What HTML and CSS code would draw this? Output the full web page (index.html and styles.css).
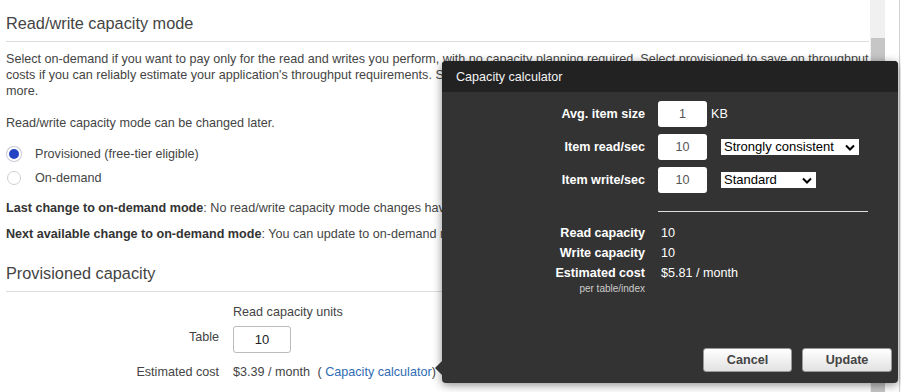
FILE: index.html
```html
<!DOCTYPE html>
<html lang="en">
<head>
    <meta charset="UTF-8">
    <title>Create table - capacity</title>
    <link rel="stylesheet" href="styles.css">
</head>
<body>

    <div class="page">
        <div class="panel">
            <div class="content">
                <h2 class="section-title first">Read/write capacity mode</h2>
                <p class="desc">Select on-demand if you want to pay only for the read and writes you perform, with no capacity planning required. Select provisioned to save on throughput costs if you can reliably estimate your application's throughput requirements. See the DynamoDB pricing page and DynamoDB Developer Guide to learn more.</p>
                <p class="later">Read/write capacity mode can be changed later.</p>

                <div class="radio-group">
                    <label class="radio-row"><span class="radio checked"></span>Provisioned (free-tier eligible)</label>
                    <label class="radio-row"><span class="radio"></span>On-demand</label>
                </div>

                <p class="note"><strong>Last change to on-demand mode</strong>: No read/write capacity mode changes have been made to this table.</p>
                <p class="note"><strong>Next available change to on-demand mode</strong>: You can update to on-demand mode at any time.</p>

                <h2 class="section-title second">Provisioned capacity</h2>
                <div class="cap-grid">
                    <span></span>
                    <span class="col-head">Read capacity units</span>
                    <span class="cap-label table-label">Table</span>
                    <span><input class="cap-input" type="text" value="10"></span>
                    <span class="cap-label cost-label">Estimated cost</span>
                    <span class="cost-value">$3.39 / month <span class="calc-link">(&nbsp;<a href="#">Capacity calculator</a>)</span></span>
                </div>
            </div>
            <div class="scrollbar"><div class="thumb"></div></div>
        </div>
        <div class="edge"></div>

        <div class="calc">
            <div class="calc-head">Capacity calculator</div>
            <div class="calc-body">
                <div class="calc-form">
                    <span class="calc-label">Avg. item size</span>
                    <input class="calc-input" type="text" value="1">
                    <span class="unit">KB</span>

                    <span class="calc-label">Item read/sec</span>
                    <input class="calc-input" type="text" value="10">
                    <span class="select-wrap wide">
                        <select class="calc-select"><option>Strongly consistent</option><option>Eventually consistent</option></select>
                        <svg class="chev" width="10" height="7" viewBox="0 0 10 7"><path d="M1 1.5 L5 5.5 L9 1.5" fill="none" stroke="#000" stroke-width="2"/></svg>
                    </span>

                    <span class="calc-label">Item write/sec</span>
                    <input class="calc-input" type="text" value="10">
                    <span class="select-wrap narrow">
                        <select class="calc-select"><option>Standard</option><option>Transactional</option></select>
                        <svg class="chev" width="10" height="7" viewBox="0 0 10 7"><path d="M1 1.5 L5 5.5 L9 1.5" fill="none" stroke="#000" stroke-width="2"/></svg>
                    </span>
                </div>

                <div class="calc-divider"></div>

                <div class="calc-results">
                    <span class="calc-label">Read capacity</span>
                    <span class="result">10</span>
                    <span class="calc-label">Write capacity</span>
                    <span class="result">10</span>
                    <span class="calc-label">Estimated cost<small>per table/index</small></span>
                    <span class="result">$5.81 / month</span>
                </div>

                <div class="calc-footer">
                    <button class="btn">Cancel</button>
                    <button class="btn">Update</button>
                </div>
            </div>
        </div>
    </div>

</body>
</html>
```

FILE: styles.css
```css
body {
    margin: 0;
    font-family: "Liberation Sans", Arial, sans-serif;
    font-size: 12.6px;
    color: #444;
    background: #fff;
}
.page {
    position: relative;
    display: flex;
    height: 392px;
    overflow: hidden;
}
.panel {
    display: flex;
    width: 885px;
}
.content {
    width: 863px;
    padding: 0 1px 0 6px;
}
.scrollbar {
    width: 15px;
    background: #f0f0f0;
}
.thumb {
    margin: 38px 0 0 1px;
    height: 400px;
    background: #c6c6c6;
}
.edge {
    width: 14px;
    border-right: 1px solid #d0d0d0;
}

.section-title {
    font-size: 16.3px;
    font-weight: normal;
    line-height: 22px;
    color: #444;
    margin: 0;
    padding-bottom: 7px;
    border-bottom: 1px solid #ddd;
}
.section-title.first { margin-top: 12px; }
.section-title.second { margin-top: 20px; }
p { margin: 0; line-height: 16px; }
.desc { margin-top: 9px; }
.later { margin-top: 16px; }
.radio-group { margin-top: 11px; }
.radio-row {
    display: flex;
    align-items: center;
    height: 24px;
}
.radio {
    box-sizing: border-box;
    width: 14px;
    height: 14px;
    margin: 0 14px 0 1px;
    border: 1px solid #cfcfcf;
    border-radius: 50%;
    background: #fff;
}
.radio.checked {
    border: 2.5px solid #fff;
    background: #2444c4;
    box-shadow: 0 0 0 1px #c8cbd6;
}
.note { margin-top: 10px; }
.note strong { color: #333; }

.cap-grid {
    display: grid;
    grid-template-columns: 213px auto;
    column-gap: 14px;
    margin-top: 12px;
    line-height: 16px;
}
.cap-label { text-align: right; }
.table-label { padding-top: 3px; margin-top: 6px; }
.cap-input {
    box-sizing: border-box;
    width: 58px;
    height: 27px;
    margin-top: 6px;
    border: 1px solid #bbb;
    border-radius: 3px;
    font-family: inherit;
    font-size: 13px;
    color: #222;
    text-align: center;
}
.cost-label, .cost-value { margin-top: 11px; }
.calc-link { margin-left: 4px; }
.calc-link a { color: #2f6cb5; text-decoration: none; }

/* calculator popover */
.calc {
    position: absolute;
    left: 442px;
    top: 61px;
    width: 456px;
    height: 322px;
    display: flex;
    flex-direction: column;
    background: #333;
    border-radius: 4px;
    box-shadow: 0 2px 10px rgba(0,0,0,0.45);
    color: #fff;
}
.calc::before {
    content: "";
    position: absolute;
    left: -7px;
    top: 300px;
    border-top: 7px solid transparent;
    border-bottom: 7px solid transparent;
    border-right: 7px solid #333;
}
.calc-head {
    height: 31px;
    line-height: 32px;
    padding-left: 14px;
    background: #222;
    border-radius: 4px 4px 0 0;
    color: #f4f4f4;
}
.calc-body {
    flex: 1;
    display: flex;
    flex-direction: column;
    padding-top: 9px;
}
.calc-form {
    display: grid;
    grid-template-columns: 203px 49px auto;
    grid-auto-rows: 26px;
    column-gap: 13px;
    row-gap: 7px;
    align-items: center;
}
.calc-label {
    text-align: right;
    font-weight: bold;
}
.calc-label small {
    display: block;
    font-weight: normal;
    font-size: 10px;
    line-height: 11px;
    color: #ccc;
}
.calc-input {
    box-sizing: border-box;
    width: 49px;
    height: 26px;
    border: none;
    border-radius: 3px;
    font-family: inherit;
    font-size: 12.6px;
    color: #555;
    text-align: center;
}
.unit { margin-left: -9px; }
.select-wrap {
    position: relative;
    display: inline-block;
    height: 16px;
    margin-left: 1px;
}
.select-wrap.wide { width: 138px; }
.select-wrap.narrow { width: 95px; }
.calc-select {
    appearance: none;
    box-sizing: border-box;
    width: 100%;
    height: 16px;
    padding: 0 0 0 3px;
    border: none;
    border-radius: 0;
    background: #fff;
    font-family: inherit;
    font-size: 13px;
    line-height: 16px;
    color: #000;
}
.chev {
    position: absolute;
    right: 4px;
    top: 5px;
}
.calc-divider {
    width: 210px;
    margin: 18px 0 0 216px;
    border-top: 1px solid #ddd;
}
.calc-results {
    display: grid;
    grid-template-columns: 203px auto;
    column-gap: 16px;
    margin-top: 11px;
    line-height: 20px;
}
.calc-results .calc-label { line-height: 20px; }
.calc-footer {
    margin-top: auto;
    display: flex;
    justify-content: flex-end;
    gap: 10px;
    padding: 0 6px 11px 0;
}
.btn {
    width: 89px;
    height: 24px;
    border: 1px solid #999;
    border-radius: 3px;
    background: linear-gradient(#fff, #e2e2e2);
    font-family: inherit;
    font-size: 12.6px;
    font-weight: bold;
    color: #444;
}
.btn + .btn { width: 90px; }
```
